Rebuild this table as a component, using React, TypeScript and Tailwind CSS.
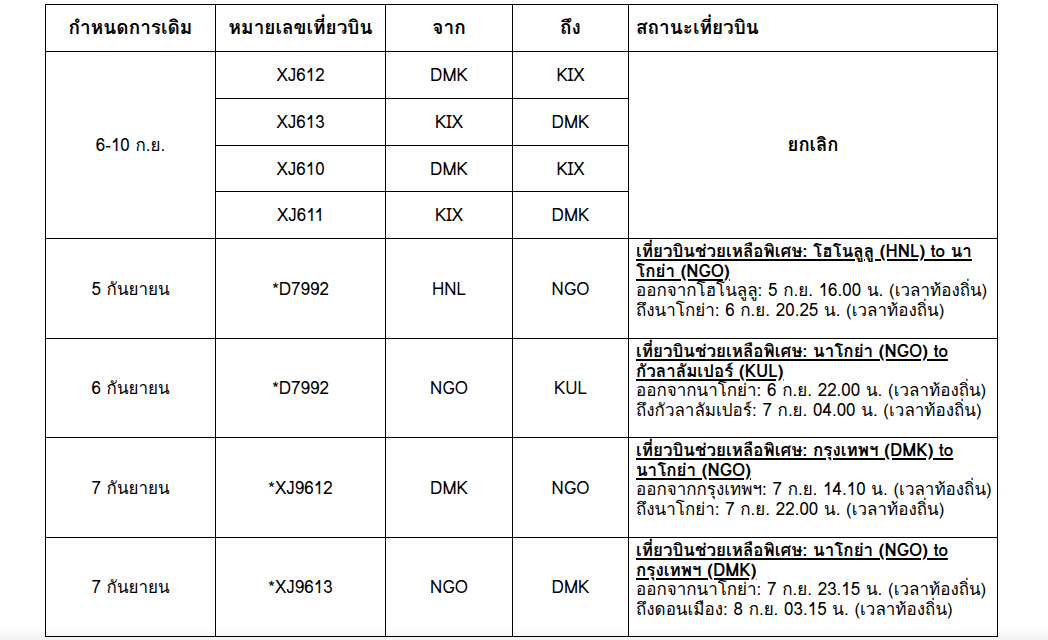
import React from "react";

const font = { fontFamily: 'Tahoma, Loma, "DejaVu Sans", sans-serif' };

type Special = {
  date: string;
  flight: string;
  from: string;
  to: string;
  title1: string;
  title2: string;
  dep: string;
  arr: string;
};

const specials: Special[] = [
  {
    date: "5 กันยายน",
    flight: "*D7992",
    from: "HNL",
    to: "NGO",
    title1: "เที่ยวบินช่วยเหลือพิเศษ: โฮโนลูลู (HNL) to นา",
    title2: "โกย่า (NGO)",
    dep: "ออกจากโฮโนลูลู: 5 ก.ย. 16.00 น. (เวลาท้องถิ่น)",
    arr: "ถึงนาโกย่า: 6 ก.ย. 20.25 น. (เวลาท้องถิ่น)",
  },
  {
    date: "6 กันยายน",
    flight: "*D7992",
    from: "NGO",
    to: "KUL",
    title1: "เที่ยวบินช่วยเหลือพิเศษ: นาโกย่า (NGO) to",
    title2: "กัวลาลัมเปอร์ (KUL)",
    dep: "ออกจากนาโกย่า: 6 ก.ย. 22.00 น. (เวลาท้องถิ่น)",
    arr: "ถึงกัวลาลัมเปอร์: 7 ก.ย. 04.00 น. (เวลาท้องถิ่น)",
  },
  {
    date: "7 กันยายน",
    flight: "*XJ9612",
    from: "DMK",
    to: "NGO",
    title1: "เที่ยวบินช่วยเหลือพิเศษ: กรุงเทพฯ (DMK) to",
    title2: "นาโกย่า (NGO)",
    dep: "ออกจากกรุงเทพฯ: 7 ก.ย. 14.10 น. (เวลาท้องถิ่น)",
    arr: "ถึงนาโกย่า: 7 ก.ย. 22.00 น. (เวลาท้องถิ่น)",
  },
  {
    date: "7 กันยายน",
    flight: "*XJ9613",
    from: "NGO",
    to: "DMK",
    title1: "เที่ยวบินช่วยเหลือพิเศษ: นาโกย่า (NGO) to",
    title2: "กรุงเทพฯ (DMK)",
    dep: "ออกจากนาโกย่า: 7 ก.ย. 23.15 น. (เวลาท้องถิ่น)",
    arr: "ถึงดอนเมือง: 8 ก.ย. 03.15 น. (เวลาท้องถิ่น)",
  },
];

const cancelled = [
  ["XJ612", "DMK", "KIX"],
  ["XJ613", "KIX", "DMK"],
  ["XJ610", "DMK", "KIX"],
  ["XJ611", "KIX", "DMK"],
];

const specialHeights = ["h-[100px]", "h-[99px]", "h-[100px]", "h-[99px]"];
const cancelHeights = ["h-[47px]", "h-[47px]", "h-[46px]", "h-[47px]"];

export default function App() {
  const td = "border border-black text-center align-middle p-0";
  const th = "border border-black text-center align-middle p-0 font-bold text-[19px]";
  return (
    <div className="w-[1048px] h-[640px] bg-gradient-to-b from-white from-[98%] to-[#f2f2f2] overflow-hidden">
      <div className="pt-[4px] pl-[45px]">
        <table
          className="border-collapse table-fixed w-[952px] text-[17px] leading-[19.5px] text-black"
          style={font}
        >
          <colgroup>
            <col className="w-[170px]" />
            <col className="w-[170px]" />
            <col className="w-[127px]" />
            <col className="w-[116px]" />
            <col className="w-[369px]" />
          </colgroup>
          <thead>
            <tr className="h-[47px]">
              <th className={th}>กำหนดการเดิม</th>
              <th className={th}>หมายเลขเที่ยวบิน</th>
              <th className={th}>จาก</th>
              <th className={th}>ถึง</th>
              <th className="border border-black text-left align-middle font-bold text-[19px] pl-[7px]">
                สถานะเที่ยวบิน
              </th>
            </tr>
          </thead>
          <tbody>
            {cancelled.map((r, i) => (
              <tr key={i} className={cancelHeights[i]}>
                {i === 0 && (
                  <td rowSpan={4} className={td}>
                    6-10 ก.ย.
                  </td>
                )}
                <td className={td}>{r[0]}</td>
                <td className={td}>{r[1]}</td>
                <td className={td}>{r[2]}</td>
                {i === 0 && (
                  <td rowSpan={4} className={td + " font-bold text-[18.5px]"}>
                    ยกเลิก
                  </td>
                )}
              </tr>
            ))}
            {specials.map((s, i) => (
              <tr key={i} className={specialHeights[i]}>
                <td className={td}>{s.date}</td>
                <td className={td}>{s.flight}</td>
                <td className={td}>{s.from}</td>
                <td className={td}>{s.to}</td>
                <td className="border border-black text-left align-top pl-[7px] pt-[2px] whitespace-nowrap">
                  <div className="font-bold underline decoration-2 underline-offset-2">
                    {s.title1}
                    <br />
                    {s.title2}
                  </div>
                  <div>{s.dep}</div>
                  <div>{s.arr}</div>
                </td>
              </tr>
            ))}
          </tbody>
        </table>
      </div>
    </div>
  );
}
